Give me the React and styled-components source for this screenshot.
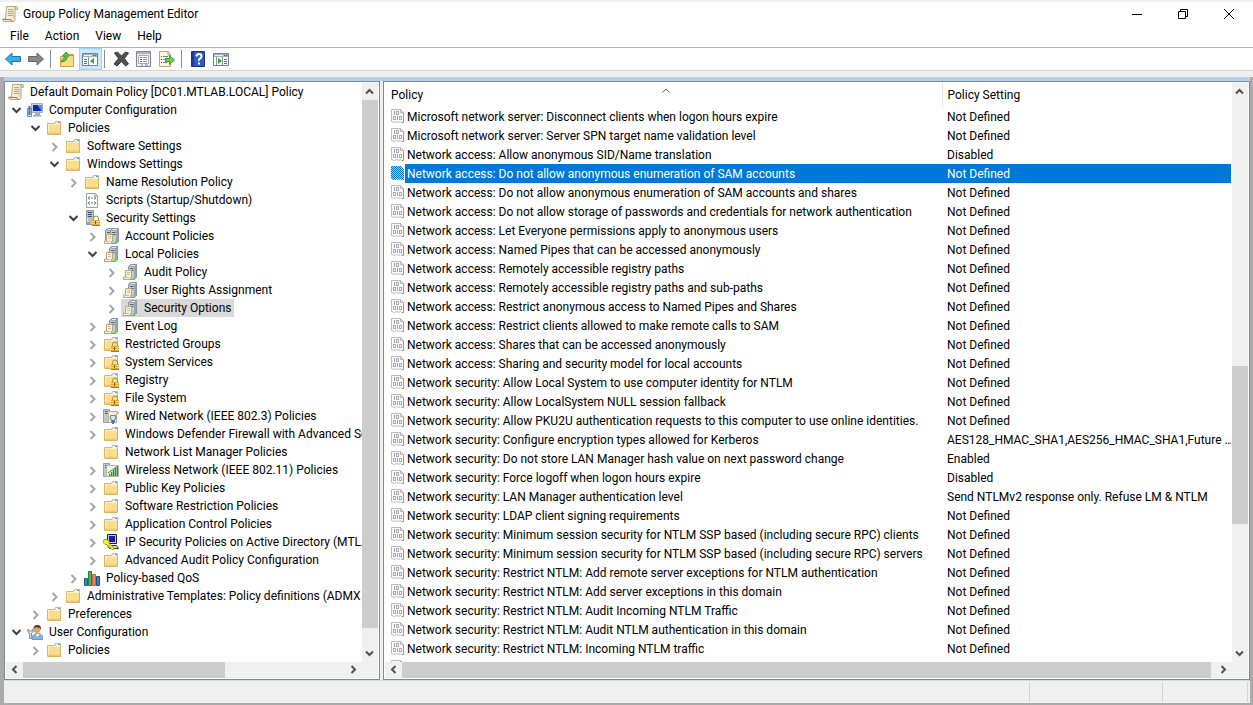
import { useState } from "react";
import styled, { createGlobalStyle } from "styled-components";

const TREE = [
    { level: 0, icon: "scroll", label: "Default Domain Policy [DC01.MTLAB.LOCAL] Policy" },
    { level: 1, icon: "computer", label: "Computer Configuration", open: true },
    { level: 2, icon: "folder", label: "Policies", open: true },
    { level: 3, icon: "folder", label: "Software Settings", open: false },
    { level: 3, icon: "folder", label: "Windows Settings", open: true },
    { level: 4, icon: "folder", label: "Name Resolution Policy", open: false },
    { level: 4, icon: "script", label: "Scripts (Startup/Shutdown)" },
    { level: 4, icon: "serverLock", label: "Security Settings", open: true },
    { level: 5, icon: "servers", label: "Account Policies", open: false },
    { level: 5, icon: "server", label: "Local Policies", open: true },
    { level: 6, icon: "server", label: "Audit Policy", open: false },
    { level: 6, icon: "server", label: "User Rights Assignment", open: false },
    { level: 6, icon: "server", label: "Security Options", open: false },
    { level: 5, icon: "server", label: "Event Log", open: false },
    { level: 5, icon: "folderLock", label: "Restricted Groups", open: false },
    { level: 5, icon: "folderLock", label: "System Services", open: false },
    { level: 5, icon: "folderLock", label: "Registry", open: false },
    { level: 5, icon: "folderLock", label: "File System", open: false },
    { level: 5, icon: "wired", label: "Wired Network (IEEE 802.3) Policies", open: false },
    { level: 5, icon: "folder", label: "Windows Defender Firewall with Advanced Se", open: false },
    { level: 5, icon: "folder", label: "Network List Manager Policies" },
    { level: 5, icon: "wireless", label: "Wireless Network (IEEE 802.11) Policies", open: false },
    { level: 5, icon: "folder", label: "Public Key Policies", open: false },
    { level: 5, icon: "folder", label: "Software Restriction Policies", open: false },
    { level: 5, icon: "folder", label: "Application Control Policies", open: false },
    { level: 5, icon: "ipsec", label: "IP Security Policies on Active Directory (MTLA", open: false },
    { level: 5, icon: "folder", label: "Advanced Audit Policy Configuration", open: false },
    { level: 4, icon: "qos", label: "Policy-based QoS", open: false },
    { level: 3, icon: "folder", label: "Administrative Templates: Policy definitions (ADMX", open: false },
    { level: 2, icon: "folder", label: "Preferences", open: false },
    { level: 1, icon: "user", label: "User Configuration", open: true },
    { level: 2, icon: "folder", label: "Policies", open: false },
];

const POLICIES = [
    ["Microsoft network server: Disconnect clients when logon hours expire", "Not Defined"],
    ["Microsoft network server: Server SPN target name validation level", "Not Defined"],
    ["Network access: Allow anonymous SID/Name translation", "Disabled"],
    ["Network access: Do not allow anonymous enumeration of SAM accounts", "Not Defined"],
    ["Network access: Do not allow anonymous enumeration of SAM accounts and shares", "Not Defined"],
    ["Network access: Do not allow storage of passwords and credentials for network authentication", "Not Defined"],
    ["Network access: Let Everyone permissions apply to anonymous users", "Not Defined"],
    ["Network access: Named Pipes that can be accessed anonymously", "Not Defined"],
    ["Network access: Remotely accessible registry paths", "Not Defined"],
    ["Network access: Remotely accessible registry paths and sub-paths", "Not Defined"],
    ["Network access: Restrict anonymous access to Named Pipes and Shares", "Not Defined"],
    ["Network access: Restrict clients allowed to make remote calls to SAM", "Not Defined"],
    ["Network access: Shares that can be accessed anonymously", "Not Defined"],
    ["Network access: Sharing and security model for local accounts", "Not Defined"],
    ["Network security: Allow Local System to use computer identity for NTLM", "Not Defined"],
    ["Network security: Allow LocalSystem NULL session fallback", "Not Defined"],
    ["Network security: Allow PKU2U authentication requests to this computer to use online identities.", "Not Defined"],
    ["Network security: Configure encryption types allowed for Kerberos", "AES128_HMAC_SHA1,AES256_HMAC_SHA1,Future …"],
    ["Network security: Do not store LAN Manager hash value on next password change", "Enabled"],
    ["Network security: Force logoff when logon hours expire", "Disabled"],
    ["Network security: LAN Manager authentication level", "Send NTLMv2 response only. Refuse LM & NTLM"],
    ["Network security: LDAP client signing requirements", "Not Defined"],
    ["Network security: Minimum session security for NTLM SSP based (including secure RPC) clients", "Not Defined"],
    ["Network security: Minimum session security for NTLM SSP based (including secure RPC) servers", "Not Defined"],
    ["Network security: Restrict NTLM: Add remote server exceptions for NTLM authentication", "Not Defined"],
    ["Network security: Restrict NTLM: Add server exceptions in this domain", "Not Defined"],
    ["Network security: Restrict NTLM: Audit Incoming NTLM Traffic", "Not Defined"],
    ["Network security: Restrict NTLM: Audit NTLM authentication in this domain", "Not Defined"],
    ["Network security: Restrict NTLM: Incoming NTLM traffic", "Not Defined"],
    ["", ""],
];

const Lock = () => (
    <g>
        <path d="M9.500 10v-1.500a2.500 2.500 0 0 1 5 0v1.500" fill="none" stroke="#a38a4c" />
        <rect x="8" y="10" width="8" height="6" fill="#e0aa36" />
        <path d="M8 11.500h8M8 13.500h8" stroke="#f6d478" />
        <path d="M8 15.500h8" stroke="#a87a1c" />
        <path d="M11.500 11v3" stroke="#7a5810" />
    </g>
);

const Folder = () => (
    <g>
        <path d="M1.500 14.500v-11h7l1-2h5v13z" fill="#fbdd8d" stroke="#d8b467" />
        <path d="M2 4.500h12M2.500 4v10" stroke="#fff0c0" fill="none" />
        <path d="M9.500 3.500l1-1.500h3.500v1.500z" fill="#fff" />
        <path d="M12 2.500h2" stroke="#4aa0e0" />
        <path d="M2 12.500h12v1.500h-12z" fill="#f2c96c" />
    </g>
);

const Tower = ({ x = 0 }) => (
    <g transform={`translate(${x} 0)`}>
        <path d="M6.500 2.500l2-2h6v13l-2 2h-6z" fill="#97a5af" stroke="#8a969f" />
        <path d="M7 3h5v12h-5z" fill="#c3ced5" />
        <path d="M8 4.500h3.500M8 6.500h3.500" stroke="#4c5c66" />
        <path d="M8 2.500l1-1h4" stroke="#e4ebef" fill="none" />
        <rect x="11" y="13" width="3" height="2" fill="#5bea28" />
    </g>
);

const MiniScroll = () => (
    <g>
        <path d="M3.500 6.500h6v7h-1v2h-7v-2.500h2z" fill="#f9f0d4" stroke="#b8a87e" />
        <path d="M5 8.500h3M5 10.500h3M3 13.500h4" stroke="#cdbf96" />
    </g>
);

const ICONS = {
    scroll: (
        <g>
            <path d="M4.500 .500h9.500q1.500 0 1.500 1.500v1.500h-2.500v10q0 2-2 2h-8.500q-2 0-2-2v-.500h3z" fill="#f5ecd2" stroke="#b5a88a" />
            <path d="M13 3.500v-2q0-1 1-1" fill="none" stroke="#a69774" />
            <path d="M6 3.500h5M6 5.500h5M6 7.500h5M6 9.500h5" stroke="#b4a47a" />
            <path d="M1 13.500h8q0 2 2 2" stroke="#958458" fill="none" />
            <path d="M11.500 5v8" stroke="#dccfa8" />
        </g>
    ),
    computer: (
        <g>
            <path d="M4.500 1.500h11v9h-11z" fill="#c7d1da" stroke="#a3b0bc" />
            <path d="M6 3h8.500v6h-8.500z" fill="#0d25b8" />
            <path d="M10.500 3h4v6z" fill="#5f8bf4" />
            <path d="M8 11h5v2h-5zM6 13h8v1.500h-8z" fill="#a2adb7" />
            <path d="M.500 6.500h4v8h-4z" fill="#dbe4ed" stroke="#7790a8" />
            <path d="M2.500 4v9" stroke="#3c6e9f" strokeWidth="2" />
            <path d="M1 8.500h3" stroke="#82b3dc" />
        </g>
    ),
    folder: <Folder />,
    folderLock: (
        <g>
            <Folder />
            <Lock />
        </g>
    ),
    script: (
        <g>
            <path d="M2.500 1.500h9l2 2v12h-11z" fill="#fafafa" stroke="#a0a0a0" />
            <path d="M11 2v2h2" fill="none" stroke="#a0a0a0" />
            <path d="M6 4.500l-2 1.500 2 1.500M10 4.500l2 1.500-2 1.500M7 6h2M6 9.500l-2 1.500 2 1.500M10 9.500l2 1.500-2 1.500M7 11h2" fill="none" stroke="#707880" />
        </g>
    ),
    serverLock: (
        <g>
            <path d="M2.500 .500h7v14h-7z" fill="#b7c3cb" stroke="#8c99a2" />
            <path d="M4 2.500h4M4 4.500h4M4 6.500h4" stroke="#43525d" />
            <path d="M3.500 8v6" stroke="#e8eef1" />
            <rect x="3" y="12" width="3" height="2" fill="#79c25d" />
            <Lock />
        </g>
    ),
    server: (
        <g>
            <Tower />
            <MiniScroll />
        </g>
    ),
    servers: (
        <g>
            <Tower x={-4} />
            <Tower x={1} />
            <MiniScroll />
        </g>
    ),
    wired: (
        <g>
            <path d="M.500 1.500h6v13h-6z" fill="#bdc8d0" stroke="#95a1aa" />
            <path d="M2 3.500h3M2 5.500h3" stroke="#4b5a65" />
            <path d="M4.500 3.500h10q1 0 1 2h-2v9h-8v-8z" fill="#f6eed8" stroke="#b9ab84" />
            <path d="M7.500 7.500h5v4h-1v3h-3v-3h-1z" fill="#dbe6ef" stroke="#6f889e" />
            <path d="M10 12v4" stroke="#347fc0" strokeWidth="2" />
        </g>
    ),
    wireless: (
        <g>
            <path d="M.500 1.500h6v13h-6z" fill="#bdc8d0" stroke="#95a1aa" />
            <path d="M2 3.500h3M2 5.500h3" stroke="#4b5a65" />
            <path d="M3.500 3.500h12v11h-12z" fill="#f4f2e4" stroke="#b8b8a0" />
            <path d="M5 14l10-10v10z" fill="#8cc79b" />
            <path d="M6.500 14v-2M8.500 14v-4M10.500 14v-6M12.500 14v-8M14.500 14v-9" stroke="#27904a" />
            <path d="M5 11l10-7" stroke="#27904a" />
        </g>
    ),
    ipsec: (
        <g>
            <path d="M4.500 .500h9v9h-9z" fill="#c8c8c8" stroke="#222" />
            <path d="M6 2h6v6h-6z" fill="#1420a8" />
            <path d="M4.500 11.500h9l2 3h-9z" fill="#d0d0d0" stroke="#333" />
            <path d="M1 5.500h3l2 2v2l5 4.500v1.500h-2l-5-5h-2l-2-2z" fill="#f8ee28" stroke="#a8a020" />
        </g>
    ),
    qos: (
        <g>
            <path d="M.500 8.500h3v7h-3z" fill="#3487d0" stroke="#1d5a95" />
            <path d="M4.500 1.500h3v14h-3z" fill="#4bbd50" stroke="#25802c" />
            <path d="M8.500 4.500h3v11h-3z" fill="#ee805a" stroke="#c9664e" />
            <path d="M12.500 6.500h3v9h-3z" fill="#278dc5" stroke="#174d79" />
        </g>
    ),
    user: (
        <g>
            <path d="M5 15.500q0-6 5.500-6t5.500 6z" fill="#84b3df" stroke="#7099c2" />
            <path d="M8.500 10l2 3 2-3z" fill="#f6f8fa" />
            <circle cx="10" cy="5.500" r="3.500" fill="#d9a273" />
            <path d="M6.500 5q0-4 4-4t3.500 5l-1-2-4-1z" fill="#513826" />
            <path d="M1 5v3l1.500 1v5.500h2v-5.500l1.500-1v-3l-1.500 2h-2z" fill="#d9e4ee" stroke="#6d8eac" />
        </g>
    ),
    back: (
        <path d="M.500 8l6.500-6v3.500h8.500v5h-8.500v3.500z" fill="#37aee9" stroke="#1f76ad" />
    ),
    forward: (
        <path d="M15.500 8l-6.500-6v3.500h-8.500v5h8.500v3.500z" fill="#8a8a8a" stroke="#626262" />
    ),
    up: (
        <g>
            <path d="M1.500 15.500v-10h6l1-2h6v12z" fill="#fbdb85" stroke="#cfa24d" />
            <path d="M11 4.500h3" stroke="#4aa0e0" />
            <path d="M2.500 9.500q3-1 3-4.500h-2l3.500-4 3.500 4h-2q0 5-6 6z" fill="#62c244" stroke="#3f9a2c" />
        </g>
    ),
    treePane: (
        <g>
            <path d="M.500 2.500h15v12h-15z" fill="#fff" stroke="#74808c" />
            <path d="M1 3h14v3h-14z" fill="#a4b0bb" />
            <path d="M2 4.500h8" stroke="#eef2f5" />
            <path d="M11 4.500h1M13 4.500h1" stroke="#4a5661" />
            <path d="M6.500 6v8" stroke="#8995a0" />
            <path d="M2 8.500h3M2 10.500h3M2 12.500h3" stroke="#3f79b8" />
            <path d="M12 7v6l-4-3z" fill="#36a13c" />
        </g>
    ),
    remove: (
        <path d="M1.500 2l3-1 4 4 4-4 3 1-4 5.500 4 5.500-3 2-4-4.500-4.500 4.500-3-2 4.500-5.500z" fill="#505050" stroke="#3c3c3c" />
    ),
    properties: (
        <g>
            <path d="M.500 .500h14v15h-14z" fill="#edf1f4" stroke="#7a8792" />
            <path d="M1 2h13" stroke="#aab5bf" strokeWidth="2" />
            <path d="M2.500 4.500h10v8h-10z" fill="#fff" stroke="#9dabb7" />
            <path d="M4 6.500h2M4 8.500h2M4 10.500h2" stroke="#2f8fce" />
            <path d="M7 6.500h4M7 8.500h4M7 10.500h4M5 14h2M9 14h3" stroke="#8492a0" />
        </g>
    ),
    exportList: (
        <g>
            <path d="M.500 .500h9l2 3v12h-11z" fill="#fbf6df" stroke="#b5aa80" />
            <path d="M9 1v3h3" fill="none" stroke="#a99d70" />
            <path d="M2 5.500h1M2 8.500h1M2 11.500h1" stroke="#444" />
            <path d="M4 5.500h5M4 8.500h4M4 11.500h4" stroke="#6f7caa" />
            <path d="M6.500 7.500h4v-3l5 4.500-5 4.500v-3h-4z" fill="#72cf45" stroke="#3b9a25" />
        </g>
    ),
    help: (
        <g>
            <path d="M1.500 .500h13v15h-13z" fill="#3558c4" stroke="#1c3183" />
            <path d="M3 1v14" stroke="#203a9a" strokeWidth="2" />
            <path d="M6.500 5.500q0-2.500 2.500-2.500t2.500 2.200q0 1.500-1.500 2.300t-1 2.500" fill="none" stroke="#fff" strokeWidth="2" />
            <path d="M8 11.500h2v2h-2z" fill="#fff" />
        </g>
    ),
    actionPane: (
        <g>
            <path d="M.500 2.500h15v12h-15z" fill="#fff" stroke="#74808c" />
            <path d="M1 3h14v3h-14z" fill="#a4b0bb" />
            <path d="M2 4.500h8" stroke="#eef2f5" />
            <path d="M11 4.500h1M13 4.500h1" stroke="#4a5661" />
            <path d="M9.500 6v8M3.500 6v8" stroke="#8995a0" />
            <path d="M11 8.500h3M11 10.500h3M11 12.500h3" stroke="#3f79b8" />
            <path d="M5 7v6l4-3z" fill="#36a13c" />
        </g>
    ),
};

const Icon = ({ name }) => (
    <IconSvg viewBox="0 0 16 16" aria-hidden="true">{ICONS[name]}</IconSvg>
);

const PAGE = "M.500 1.500h9l3 3v10h-2l-1-1-2 1-2-1-2 1-3-1z";

const PolicyIcon = ({ selected }) => (
    <PolicySvg viewBox="0 0 14 16" aria-hidden="true">
        <path d={PAGE} fill="#fafafa" stroke="#bcbcbc" />
        <path d="M9.500 1.500v3h3" fill="none" stroke="#b4b4b4" />
        <path d="M12.500 5v9.500h-2" fill="none" stroke="#9c9c9c" />
        <path d="M3.500 3v4M6.500 8v4" stroke="#a29eb6" />
        <rect x="5.500" y="3.500" width="2" height="3" fill="none" stroke="#aca8be" />
        <rect x="2.500" y="8.500" width="2" height="3" fill="none" stroke="#aca8be" />
        <rect x="8.500" y="8.500" width="2" height="3" fill="none" stroke="#aca8be" />
        {selected && (
            <>
                <defs>
                    <pattern id="picked" width="2" height="2" patternUnits="userSpaceOnUse">
                        <path d="M0 0h1v1h-1zM1 1h1v1h-1z" fill="#0078d7" />
                    </pattern>
                </defs>
                <path d={PAGE} fill="#9ccaf0" stroke="#9ccaf0" />
                <path d={PAGE} fill="url(#picked)" stroke="url(#picked)" />
            </>
        )}
    </PolicySvg>
);

const ARROWS = {
    up: "M4 9.500l3.500-3.500 3.500 3.500",
    down: "M4 5.500l3.500 3.500 3.500-3.500",
    left: "M9.500 4l-3.500 3.500 3.500 3.500",
    right: "M5.500 4l3.500 3.500-3.500 3.500",
    expanded: "M4.500 6l4 4 4-4",
    collapsed: "M6.500 4l4 4-4 4",
};

const Arrow = ({ dir }) => (
    <ArrowSvg viewBox="0 0 16 16" aria-hidden="true">
        <path d={ARROWS[dir]} />
    </ArrowSvg>
);

const ScrollBar = ({ vertical, before, size, after }) => (
    <Bar $vertical={vertical}>
        <BarButton aria-label={vertical ? "Scroll up" : "Scroll left"}>
            <Arrow dir={vertical ? "up" : "left"} />
        </BarButton>
        <Space $grow={before} />
        <Thumb $grow={size} />
        <Space $grow={after} />
        <BarButton aria-label={vertical ? "Scroll down" : "Scroll right"}>
            <Arrow dir={vertical ? "down" : "right"} />
        </BarButton>
    </Bar>
);

const App = () => {
    const [node, setNode] = useState(12);
    const [policy, setPolicy] = useState(3);

    return (
        <>
            <GlobalStyle />
            <Window>
                <TitleBar>
                    <Icon name="scroll" />
                    <Title>Group Policy Management Editor</Title>
                    <CaptionButton aria-label="Minimize">
                        <CaptionSvg viewBox="0 0 12 12"><path d="M1 6.500h10" /></CaptionSvg>
                    </CaptionButton>
                    <CaptionButton aria-label="Restore">
                        <CaptionSvg viewBox="0 0 12 12"><path d="M1.500 3.500h7v7h-7zM3.500 3v-1.500h7v7h-1.500" /></CaptionSvg>
                    </CaptionButton>
                    <CaptionButton aria-label="Close">
                        <CaptionSvg viewBox="0 0 12 12"><path d="M1 1l10 10M11 1l-10 10" /></CaptionSvg>
                    </CaptionButton>
                </TitleBar>
                <MenuBar>
                    <MenuButton>File</MenuButton>
                    <MenuButton>Action</MenuButton>
                    <MenuButton>View</MenuButton>
                    <MenuButton>Help</MenuButton>
                </MenuBar>
                <ToolBar>
                    <ToolButton aria-label="Back"><Icon name="back" /></ToolButton>
                    <ToolButton aria-label="Forward"><Icon name="forward" /></ToolButton>
                    <Separator />
                    <ToolButton aria-label="Up one level"><Icon name="up" /></ToolButton>
                    <ToolButton aria-label="Show console tree" $active><Icon name="treePane" /></ToolButton>
                    <Separator />
                    <ToolButton aria-label="Delete"><Icon name="remove" /></ToolButton>
                    <ToolButton aria-label="Properties"><Icon name="properties" /></ToolButton>
                    <ToolButton aria-label="Export list"><Icon name="exportList" /></ToolButton>
                    <Separator />
                    <ToolButton aria-label="Help"><Icon name="help" /></ToolButton>
                    <ToolButton aria-label="Show action pane"><Icon name="actionPane" /></ToolButton>
                </ToolBar>
                <Frame>
                    <Panes>
                        <Pane>
                            <Tree role="tree">
                                {TREE.map((item, i) => (
                                    <TreeRow
                                        key={i}
                                        role="treeitem"
                                        aria-level={item.level + 1}
                                        aria-expanded={item.open}
                                        aria-selected={node === i}
                                        $level={item.level}
                                        onClick={() => setNode(i)}
                                    >
                                        {item.level > 0 && (
                                            <Twisty $open={item.open}>
                                                {item.open !== undefined && <Arrow dir={item.open ? "expanded" : "collapsed"} />}
                                            </Twisty>
                                        )}
                                        <TreeItem $selected={node === i}>
                                            <Icon name={item.icon} />
                                            {item.label}
                                        </TreeItem>
                                    </TreeRow>
                                ))}
                            </Tree>
                            <ScrollBar vertical before={0} size={528} after={17} />
                            <ScrollBar before={0} size={201} after={120} />
                            <Corner />
                        </Pane>
                        <Pane>
                            <List>
                                <Table>
                                    <thead>
                                        <tr>
                                            <HeadCell aria-sort="ascending">
                                                <HeadContent>
                                                    Policy
                                                    <SortMark viewBox="0 0 8 5" aria-hidden="true"><path d="M.500 4.500l3.500-3.500 3.500 3.500" /></SortMark>
                                                </HeadContent>
                                            </HeadCell>
                                            <HeadCell $width="289px">Policy Setting</HeadCell>
                                        </tr>
                                    </thead>
                                    <tbody>
                                        {POLICIES.map(([name, setting], i) => (
                                            <tr key={i} onClick={() => setPolicy(i)}>
                                                <Cell>
                                                    <PolicyName>
                                                        <PolicyIcon selected={policy === i} />
                                                        <PolicyLabel $selected={policy === i}>{name}</PolicyLabel>
                                                    </PolicyName>
                                                </Cell>
                                                <SettingCell $selected={policy === i}>{setting}</SettingCell>
                                            </tr>
                                        ))}
                                    </tbody>
                                </Table>
                            </List>
                            <ScrollBar vertical before={266} size={158} after={121} />
                            <ScrollBar before={0} size={809} after={4} />
                            <Corner />
                        </Pane>
                    </Panes>
                    <StatusBar>
                        <StatusText />
                        <StatusPart $width="133px" />
                        <StatusPart $width="85px" />
                    </StatusBar>
                </Frame>
            </Window>
        </>
    );
};

export default App;

const GlobalStyle = createGlobalStyle`
    * {
        box-sizing: border-box;
    }
    body {
        margin: 0;
        font-family: Roboto, "Noto Sans", sans-serif;
        font-size: 12px;
        color: #000;
    }
    button {
        font: inherit;
        color: inherit;
        border: none;
        background: none;
        padding: 0;
    }
`
const Window = styled.div`
    display: flex;
    flex-direction: column;
    height: 100vh;
    overflow: hidden;
    background: #fff;
    border-top: 2px solid #f0f0f0;
`
const TitleBar = styled.header`
    display: flex;
    align-items: center;
    flex: none;
    height: 24px;
    padding: 0 1px 0 2px;
`
const Title = styled.h1`
    flex: 1;
    margin: 0 0 0 5px;
    font-size: 12px;
    font-weight: normal;
`
const CaptionButton = styled.button`
    display: flex;
    align-items: center;
    justify-content: center;
    width: 46px;
    height: 22px;
`
const CaptionSvg = styled.svg`
    width: 12px;
    height: 12px;
    fill: none;
    stroke: #000;
`
const MenuBar = styled.nav`
    display: flex;
    flex: none;
    height: 22px;
    padding-left: 2px;
    border-bottom: 1px solid #b4b4b8;
`
const MenuButton = styled.button`
    padding: 0 8px 2px;
`
const ToolBar = styled.div`
    display: flex;
    align-items: center;
    flex: none;
    height: 23px;
    padding-left: 2px;
    border-bottom: 1px solid #d5d5d5;
`
const ToolButton = styled.button`
    display: flex;
    align-items: center;
    width: 23px;
    height: 22px;
    padding-left: 2px;
    border: 1px solid ${(props) => (props.$active ? "#99d1ff" : "transparent")};
    background: ${(props) => (props.$active ? "#cce8ff" : "none")};
`
const Separator = styled.span`
    width: 1px;
    height: 18px;
    margin: 0 5px 0 2px;
    background: #8c8c8c;
`
const Frame = styled.main`
    display: flex;
    flex-direction: column;
    flex: 1;
    min-height: 0;
    border: solid #ababab;
    border-width: 0 3px 2px 4px;
    margin-top: 6px;
    background: #f0f0f0;
    box-shadow: 0 -6px #f0f0f0;
`
const Panes = styled.div`
    display: grid;
    grid-template-columns: 376px minmax(0, 1fr);
    grid-template-rows: minmax(0, 1fr);
    gap: 3px;
    flex: 1;
    min-height: 0;
    border-top: 4px solid #b4d0ea;
`
const Pane = styled.section`
    display: grid;
    grid-template-columns: minmax(0, 1fr) 16px;
    grid-template-rows: minmax(0, 1fr) 16px;
    padding: 1px;
    border: 1px solid #828790;
    background: #fff;
`
const Tree = styled.ul`
    margin: 0;
    padding: 0;
    overflow: hidden;
    list-style: none;
`
const TreeRow = styled.li`
    display: flex;
    height: 18px;
    padding-left: ${(props) => (props.$level ? 2 + 19 * (props.$level - 1) : 1)}px;
    white-space: nowrap;
`
const Twisty = styled.span`
    flex: none;
    width: 18px;
    height: 18px;
    padding-top: ${(props) => (props.$open ? 1 : 2)}px;
    color: ${(props) => (props.$open ? "#404040" : "#a6a6a6")};
`
const TreeItem = styled.span`
    display: flex;
    align-items: center;
    flex: none;
    gap: 6px;
    padding: 0 3px 0 1px;
    line-height: 18px;
    background: ${(props) => (props.$selected ? "#d9d9d9" : "none")};
`
const IconSvg = styled.svg`
    flex: none;
    width: 16px;
    height: 16px;
`
const PolicySvg = styled.svg`
    flex: none;
    width: 14px;
    height: 16px;
    margin-top: 1px;
`
const ArrowSvg = styled.svg`
    display: block;
    width: 16px;
    height: 16px;
    fill: none;
    stroke: currentColor;
    stroke-width: 2;
`
const Bar = styled.div`
    display: flex;
    flex-direction: ${(props) => (props.$vertical ? "column" : "row")};
    background: #f0f0f0;
    color: #505050;
`
const BarButton = styled.button`
    display: flex;
    align-items: center;
    justify-content: center;
    flex: 0 0 17px;
`
const Space = styled.div`
    flex: ${(props) => props.$grow} 0 0;
`
const Thumb = styled.div`
    flex: ${(props) => props.$grow} 0 0;
    background: #cdcdcd;
`
const Corner = styled.div`
    background: #f0f0f0;
`
const List = styled.div`
    padding-right: 1px;
    overflow: hidden;
`
const Table = styled.table`
    width: 100%;
    table-layout: fixed;
    border-collapse: collapse;
`
const HeadCell = styled.th`
    width: ${(props) => props.$width || "auto"};
    height: 24px;
    padding: 0 0 0 ${(props) => (props.$width ? 5 : 6)}px;
    border-right: ${(props) => (props.$width ? "none" : "1px solid #e5e5e5")};
    font-weight: normal;
    text-align: left;
`
const HeadContent = styled.span`
    display: grid;
    grid-template-columns: 1fr auto 1fr;
`
const SortMark = styled.svg`
    width: 8px;
    height: 5px;
    fill: none;
    stroke: #606060;
`
const Cell = styled.td`
    height: 19px;
    padding: 0;
`
const PolicyName = styled.div`
    display: flex;
    align-items: flex-start;
    padding-left: 6px;
    height: 19px;
`
const PolicyLabel = styled.span`
    flex: 1;
    padding: 1px 0 0 2px;
    line-height: 18px;
    white-space: nowrap;
    color: ${(props) => (props.$selected ? "#fff" : "#000")};
    background: ${(props) => (props.$selected ? "#0078d7" : "none")};
`
const SettingCell = styled.td`
    height: 19px;
    padding: 1px 0 0 5px;
    line-height: 18px;
    overflow: hidden;
    white-space: nowrap;
    color: ${(props) => (props.$selected ? "#fff" : "#000")};
    background: ${(props) => (props.$selected ? "#0078d7" : "none")};
`
const StatusBar = styled.footer`
    display: flex;
    flex: none;
    height: 23px;
    padding: 1px 2px 1px 0;
    border-top: 1px solid #d4d8e0;
`
const StatusText = styled.div`
    flex: 1;
    border-right: 1px solid #d5d5d5;
`
const StatusPart = styled.div`
    width: ${(props) => props.$width};
    border-right: 1px solid #d5d5d5;
`
